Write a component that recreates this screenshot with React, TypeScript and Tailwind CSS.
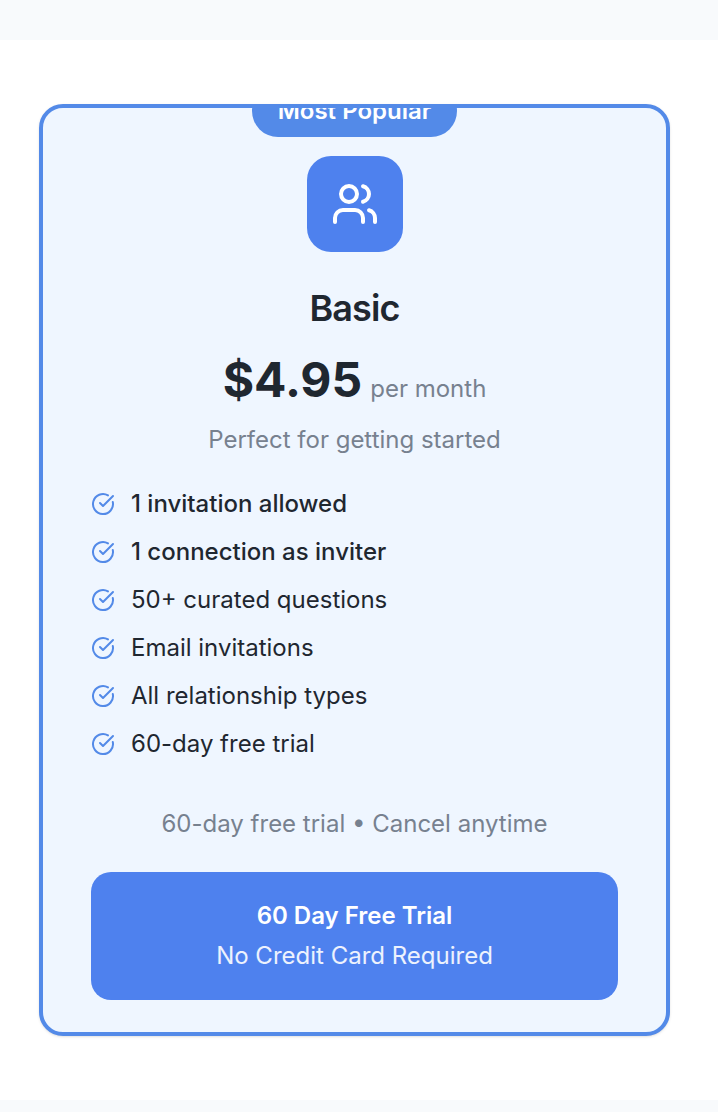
import { CircleCheckBig, Users } from "lucide-react";

const features = [
  { label: "1 invitation allowed", strong: true },
  { label: "1 connection as inviter", strong: true },
  { label: "50+ curated questions", strong: false },
  { label: "Email invitations", strong: false },
  { label: "All relationship types", strong: false },
  { label: "60-day free trial", strong: false },
];

function PricingCard() {
  return (
    <article className="relative flex flex-col overflow-hidden rounded-3xl border-4 border-[#538ae8] bg-[#eff6ff] px-12 pt-12 pb-8 shadow-sm">
      <div className="absolute inset-x-0 -top-[23px] flex justify-center">
        <span className="rounded-full bg-[#538ae8] px-[26px] py-[10px] text-2xl leading-8 font-semibold text-white">
          Most Popular
        </span>
      </div>
      <header className="flex flex-col items-center text-center">
        <div className="flex size-24 items-center justify-center rounded-3xl bg-[#4e81ee] text-white">
          <Users size={48} strokeWidth={2} aria-hidden="true" />
        </div>
        <h2 className="mt-8 text-4xl leading-12 font-semibold tracking-tight">Basic</h2>
        <p className="mt-4 flex items-baseline gap-2">
          <span className="text-5xl leading-16 font-bold">$4.95</span>
          <span className="text-2xl leading-8 text-[#77818f]">per month</span>
        </p>
        <p className="mt-3 text-2xl leading-8 text-[#77818f]">Perfect for getting started</p>
      </header>
      <ul className="mt-8 flex flex-col gap-4">
        {features.map((feature) => (
          <li key={feature.label} className="flex items-center gap-4 text-2xl leading-8">
            <CircleCheckBig size={24} strokeWidth={2} className="shrink-0 text-[#538ae8]" aria-hidden="true" />
            <span className={feature.strong ? "font-medium" : "font-normal"}>{feature.label}</span>
          </li>
        ))}
      </ul>
      <p className="mt-12 text-center text-2xl leading-8 text-[#77818f]">60-day free trial • Cancel anytime</p>
      <button
        type="button"
        className="mt-8 flex w-full flex-col items-center gap-2 rounded-[20px] bg-[#4e81ee] px-8 py-7 text-2xl leading-8 text-white"
      >
        <span className="font-semibold">60 Day Free Trial</span>
        <span className="text-white/90">No Credit Card Required</span>
      </button>
    </article>
  );
}

export default function App() {
  return (
    <div className="min-h-screen bg-[#f8fafc] pt-10 font-[Inter,sans-serif] text-[#1f2730] antialiased [font-optical-sizing:none]">
      <main className="bg-white py-16 pr-12 pl-[39px]">
        <PricingCard />
      </main>
    </div>
  );
}
